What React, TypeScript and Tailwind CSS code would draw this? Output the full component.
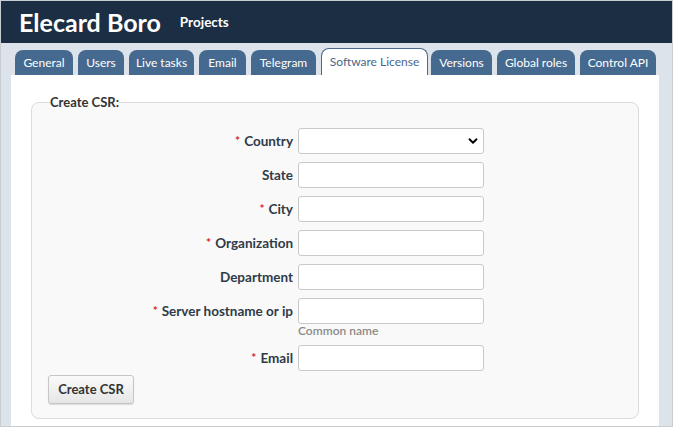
import { ChevronDown } from "lucide-react";

const tabs: { name: string; w: string }[] = [
  { name: "General", w: "w-[58px]" },
  { name: "Users", w: "w-[46px]" },
  { name: "Live tasks", w: "w-[65px]" },
  { name: "Email", w: "w-[47px]" },
  { name: "Telegram", w: "w-[65px]" },
  { name: "Software License", w: "w-[107px]" },
  { name: "Versions", w: "w-[61px]" },
  { name: "Global roles", w: "w-[78px]" },
  { name: "Control API", w: "w-[76px]" },
];

type Field = { label: string; required?: boolean; select?: boolean; hint?: string };

const fields: Field[] = [
  { label: "Country", required: true, select: true },
  { label: "State" },
  { label: "City", required: true },
  { label: "Organization", required: true },
  { label: "Department" },
  { label: "Server hostname or ip", required: true, hint: "Common name" },
  { label: "Email", required: true },
];

function FormRow({ field }: { field: Field }) {
  return (
    <div className="flex items-start gap-[5px]">
      <label className="w-[245px] h-[26px] flex items-center justify-end text-[13.5px] font-bold text-[#2f3b48] whitespace-nowrap">
        {field.required && <span className="text-[#e0201c] mr-[4px] text-[12px]">*</span>}
        {field.label}
      </label>
      <div className="flex flex-col">
        {field.select ? (
          <div className="relative w-[186px] h-[26px]">
            <select className="appearance-none w-full h-full bg-white border border-[#c9c9c9] rounded-[3px]" />
            <ChevronDown
              className="absolute right-[4px] top-[6px] w-[14px] h-[14px] text-black pointer-events-none"
              strokeWidth={3.2}
            />
          </div>
        ) : (
          <input className="w-[186px] h-[26px] bg-white border border-[#c9c9c9] rounded-[3px]" />
        )}
        {field.hint && (
          <span className="text-[12px] leading-[12px] mt-[1px] font-semibold text-[#8a8a8a]">
            {field.hint}
          </span>
        )}
      </div>
    </div>
  );
}

export default function App() {
  return (
    <div
      className="w-[673px] h-[427px] overflow-hidden bg-[#dce3ea] border border-[#c8cdd2] flex flex-col"
      style={{ fontFamily: "Lato, 'Noto Sans', sans-serif" }}
    >
      <header className="h-[42px] shrink-0 bg-[#1b2e43] flex items-center px-[18px] gap-[19px]">
        <h1 className="text-[25px] font-bold text-white leading-none">Elecard Boro</h1>
        <span className="text-[13.5px] font-bold text-white">Projects</span>
      </header>

      <nav className="flex items-end gap-[5px] pl-[14px] h-[32px] shrink-0">
        {tabs.map((t) =>
          t.name === "Software License" ? (
            <div
              key={t.name}
              className={`${t.w} h-[27px] flex items-center justify-center whitespace-nowrap text-[12px] text-[#4a6789] bg-white border border-b-0 border-[#4a6a8d] rounded-t-[8px] -mr-[2px]`}
            >
              {t.name}
            </div>
          ) : (
            <div
              key={t.name}
              className={`${t.w} h-[25px] flex items-center justify-center whitespace-nowrap text-[12px] text-white bg-[#466a8f] rounded-t-[8px]`}
            >
              {t.name}
            </div>
          )
        )}
      </nav>

      <main className="mx-[10px] w-[648px] flex-1 bg-white px-[20px] pt-[19px]">
        <fieldset className="border border-[#dcdcdc] rounded-[8px] bg-[#f9f9f9] px-[16px] pb-[14px]">
          <legend className="ml-[2px] text-[13px] font-bold text-[#333] leading-[16px]">Create CSR:</legend>
          <div className="flex flex-col gap-[8px] mt-[18px]">
            {fields.map((f) => (
              <FormRow key={f.label} field={f} />
            ))}
          </div>
          <button className="mt-[4px] h-[29px] w-[86px] text-[13px] font-bold text-[#333] border border-[#c6c6c6] rounded-[3px] bg-gradient-to-b from-[#fafafa] to-[#e6e6e6] shadow-[0_1px_1px_rgba(0,0,0,0.12)]">
            Create CSR
          </button>
        </fieldset>
      </main>
    </div>
  );
}
